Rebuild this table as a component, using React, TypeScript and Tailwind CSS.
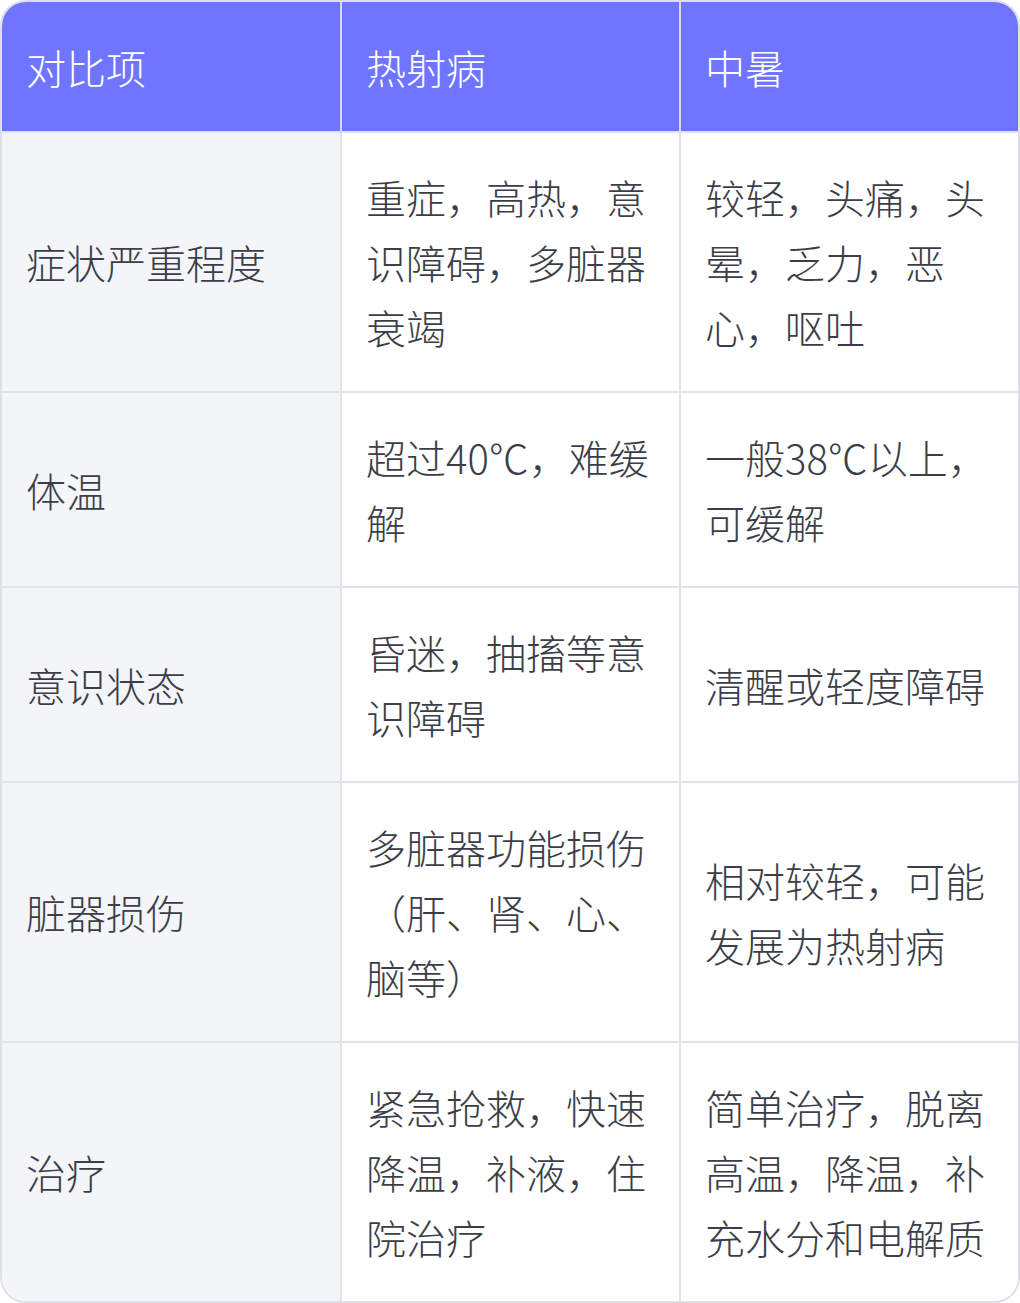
const rows: [string, string, string][] = [
  ['症状严重程度', '重症，高热，意识障碍，多脏器衰竭', '较轻，头痛，头晕，乏力，恶心，呕吐'],
  ['体温', '超过40℃，难缓解', '一般38℃以上，可缓解'],
  ['意识状态', '昏迷，抽搐等意识障碍', '清醒或轻度障碍'],
  ['脏器损伤', '多脏器功能损伤（肝、肾、心、脑等）', '相对较轻，可能发展为热射病'],
  ['治疗', '紧急抢救，快速降温，补液，住院治疗', '简单治疗，脱离高温，降温，补充水分和电解质'],
];

const cell = 'px-[24px] pt-[32px] pb-[31px] align-middle text-left';
const head = 'px-[24px] pt-[33px] pb-[31px] align-middle text-left font-light';

export default function App() {
  return (
    <div
      className="w-[1020px] min-h-[1303px] bg-white"
      style={{ fontFamily: '"Noto Sans CJK SC", "Noto Sans", sans-serif' }}
    >
      <div className="w-[1020px] overflow-hidden rounded-[26px] border-2 border-[#dfe0e6]">
        <table className="w-full table-fixed border-collapse text-[40px] leading-[65px] font-light">
          <thead>
            <tr className="bg-[#6f75ff] text-white">
              <th className={`${head} border-r-2 border-[#d6d8e6] w-[339px]`}>对比项</th>
              <th className={`${head} border-r-2 border-[#d6d8e6] w-[339px]`}>热射病</th>
              <th className={head}>中暑</th>
            </tr>
          </thead>
          <tbody className="text-[#3b3e49]">
            {rows.map(([a, b, c], i) => (
              <tr key={i} className="border-t-2 border-[#e2e3e8]">
                <td className={`${cell} bg-[#f4f5f9] border-r-2 border-[#e2e3e8]`}>{a}</td>
                <td className={`${cell} bg-white border-r-2 border-[#e2e3e8]`}>{b}</td>
                <td className={`${cell} bg-white`}>{c}</td>
              </tr>
            ))}
          </tbody>
        </table>
      </div>
    </div>
  );
}
